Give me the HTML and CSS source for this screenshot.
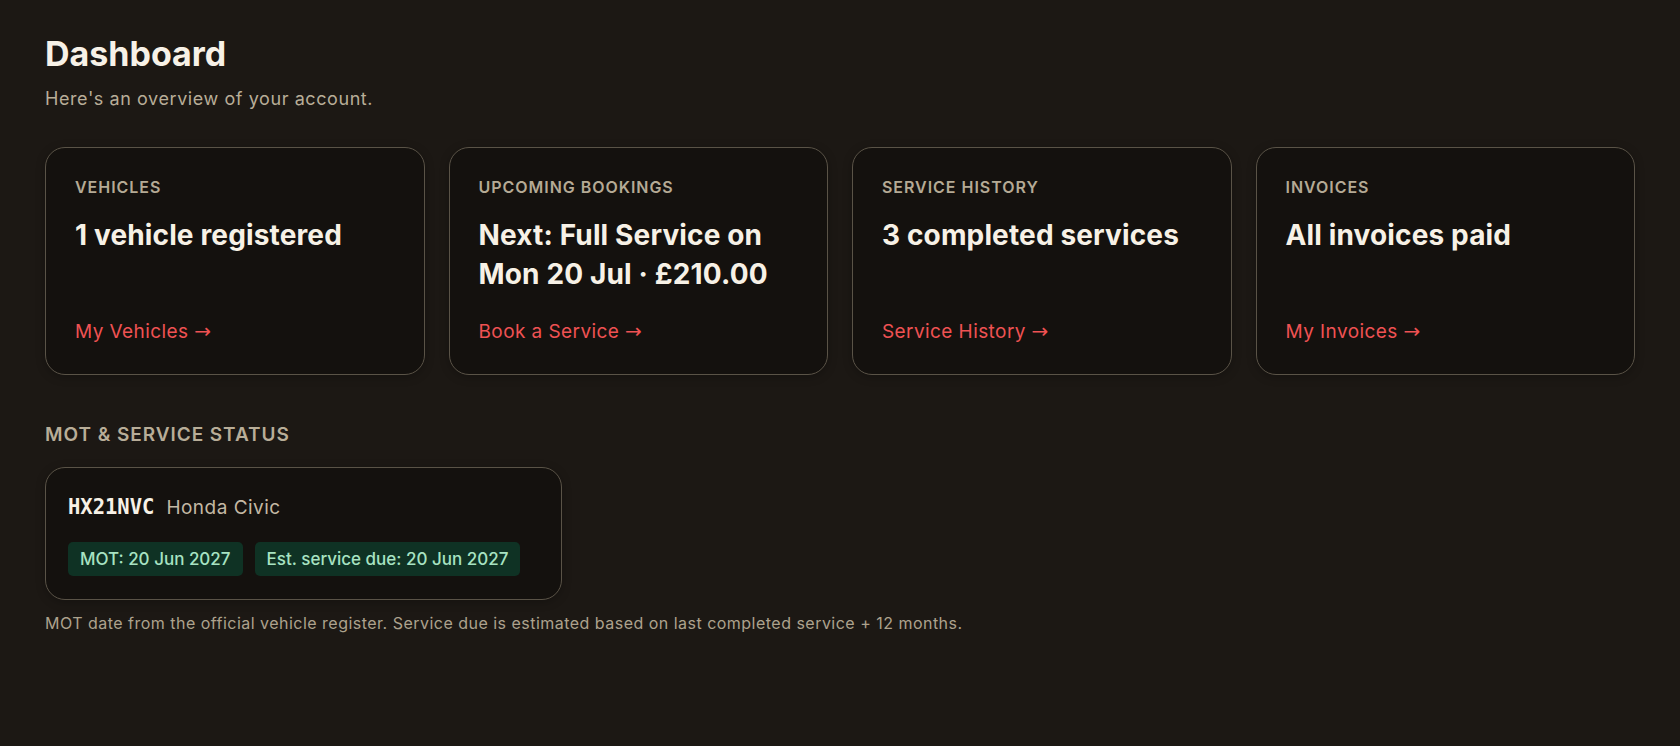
FILE: index.html
```html
<!DOCTYPE html>
<html lang="en">
<head>
<meta charset="utf-8">
<title>Dashboard</title>
<link rel="stylesheet" href="styles.css">
</head>
<body>
<main class="page">
  <header class="page-head">
    <h1 class="page-title">Dashboard</h1>
    <p class="page-sub">Here's an overview of your account.</p>
  </header>

  <section class="cards">
    <article class="card">
      <div class="card-label">Vehicles</div>
      <div class="card-value">1 vehicle registered</div>
      <a class="card-link" href="#">My Vehicles <span class="arrow">→</span></a>
    </article>
    <article class="card">
      <div class="card-label">Upcoming Bookings</div>
      <div class="card-value">Next: Full Service on Mon 20 Jul · £210.00</div>
      <a class="card-link" href="#">Book a Service <span class="arrow">→</span></a>
    </article>
    <article class="card">
      <div class="card-label">Service History</div>
      <div class="card-value">3 completed services</div>
      <a class="card-link" href="#">Service History <span class="arrow">→</span></a>
    </article>
    <article class="card">
      <div class="card-label">Invoices</div>
      <div class="card-value">All invoices paid</div>
      <a class="card-link" href="#">My Invoices <span class="arrow">→</span></a>
    </article>
  </section>

  <section class="status">
    <h2 class="section-title">MOT &amp; Service Status</h2>
    <div class="status-card">
      <div class="vehicle-row">
        <span class="plate">HX21NVC</span>
        <span class="model">Honda Civic</span>
      </div>
      <div class="badges">
        <span class="badge">MOT: 20 Jun 2027</span>
        <span class="badge">Est. service due: 20 Jun 2027</span>
      </div>
    </div>
    <p class="note">MOT date from the official vehicle register. Service due is estimated based on last completed service + 12 months.</p>
  </section>
</main>
</body>
</html>
```

FILE: styles.css
```css
* { box-sizing: border-box; }

html, body {
  margin: 0;
  padding: 0;
  background: #1c1814;
  min-height: 100%;
}

body {
  font-family: Inter, "Noto Sans", "Liberation Sans", sans-serif;
  color: #f6f0e6;
}

.page {
  padding: 34px 45px 40px;
}

.page-title {
  margin: 0 0 10px;
  font-size: 34px;
  line-height: 1.2;
  font-weight: 700;
  color: #f7f1e7;
}

.page-sub {
  margin: 0 0 35px;
  font-size: 18px;
  line-height: 1.5;
  letter-spacing: 0.032em;
  color: #b8ad98;
}

.cards {
  display: grid;
  grid-template-columns: repeat(4, 1fr);
  gap: 24px;
}

.card {
  display: flex;
  flex-direction: column;
  background: #14110e;
  border: 1px solid #5a5347;
  border-radius: 20px;
  padding: 27px 29px 28px;
  box-shadow: 0 2px 10px rgba(0, 0, 0, 0.25);
}

.card-label {
  font-size: 16px;
  line-height: 24px;
  font-weight: 600;
  letter-spacing: 0.06em;
  text-transform: uppercase;
  color: #b5aa95;
  margin-bottom: 17px;
}

.card-value {
  font-size: 28px;
  line-height: 1.4;
  font-weight: 700;
  letter-spacing: 0.005em;
  color: #f7f1e6;
}

.card-link {
  margin-top: auto;
  padding-top: 24px;
  font-size: 19px;
  line-height: 28px;
  font-weight: 400;
  letter-spacing: 0.022em;
  color: #ef5253;
  text-decoration: none;
}

.arrow {
  font-family: "DejaVu Sans", sans-serif;
  font-weight: 400;
  font-size: 20px;
  line-height: 1;
  letter-spacing: 0;
}

.status {
  margin-top: 46px;
}

.section-title {
  margin: 0 0 19px;
  font-size: 19px;
  line-height: 27px;
  font-weight: 600;
  letter-spacing: 0.05em;
  text-transform: uppercase;
  color: #b8ad98;
}

.status-card {
  width: 517px;
  background: #14110e;
  border: 1px solid #5a5347;
  border-radius: 20px;
  padding: 24px 22px 23px;
  box-shadow: 0 2px 10px rgba(0, 0, 0, 0.25);
}

.vehicle-row {
  display: flex;
  align-items: baseline;
  gap: 12px;
  line-height: 30px;
}

.plate {
  font-family: "DejaVu Sans Mono", "Liberation Mono", monospace;
  font-size: 20.5px;
  font-weight: 700;
  color: #f7f1e6;
}

.model {
  font-size: 19px;
  letter-spacing: 0.025em;
  color: #c4b9a4;
}

.badges {
  display: flex;
  gap: 12px;
  margin-top: 19px;
}

.badge {
  display: inline-block;
  padding: 0 12px;
  height: 34px;
  line-height: 34px;
  border-radius: 5px;
  background: #0f3224;
  color: #a7e3c2;
  font-size: 17px;
  font-weight: 500;
}

.note {
  margin: 11px 0 0;
  font-size: 16px;
  line-height: 24px;
  letter-spacing: 0.03em;
  color: #ada28d;
}
```
